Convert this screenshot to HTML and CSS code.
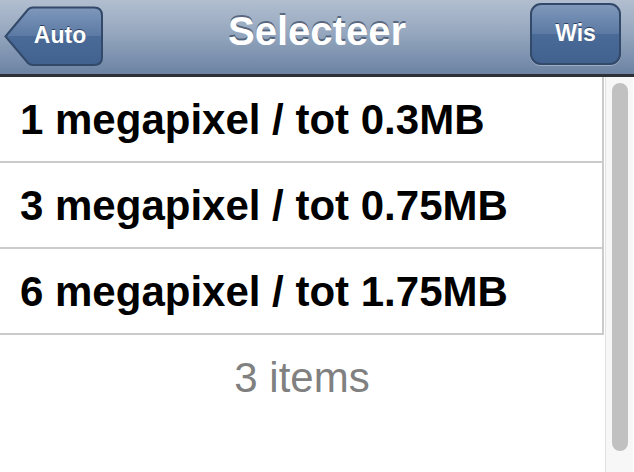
FILE: index.html
```html
<!DOCTYPE html>
<html lang="nl">
<head>
  <meta charset="UTF-8">
  <title>Selecteer</title>
  <link rel="stylesheet" href="styles.css">
</head>
<body>
  <div class="navbar">
    <a class="nav-btn back-btn" href="#">
      <svg class="back-shape" width="100" height="62" viewBox="0 0 100 62">
        <defs>
          <linearGradient id="btn-grad" x1="0" y1="0" x2="0" y2="1">
            <stop offset="0" stop-color="#7f98bb"/>
            <stop offset="0.5" stop-color="#5b79a3"/>
            <stop offset="0.5" stop-color="#4a6a98"/>
            <stop offset="1" stop-color="#41628f"/>
          </linearGradient>
        </defs>
        <path d="M1.5 32.5 L24 5.5 Q26 3.5 29 3.5 L90 3.5 Q98 3.5 98 11.5 L98 53.5 Q98 61 90 61 L29 61 Q26 61 24 59 Z" fill="url(#btn-grad)" stroke="#33496a" stroke-width="2"/>
      </svg>
      <span class="btn-label">Auto</span>
    </a>
    <h1 class="title">Selecteer</h1>
    <a class="nav-btn wis-btn" href="#"><span class="btn-label">Wis</span></a>
  </div>

  <div class="content">
    <div class="list-col">
      <ul class="list">
        <li class="row">1 megapixel / tot 0.3MB</li>
        <li class="row">3 megapixel / tot 0.75MB</li>
        <li class="row">6 megapixel / tot 1.75MB</li>
      </ul>
      <div class="count">3 items</div>
    </div>
    <div class="scroll-track">
      <div class="scroll-thumb"></div>
    </div>
  </div>
</body>
</html>
```

FILE: styles.css
```css
body {
  margin: 0;
  width: 634px;
  height: 472px;
  overflow: hidden;
  font-family: "Liberation Sans", Arial, sans-serif;
  background: #fff;
}
.navbar {
  position: relative;
  height: 74px;
  border-bottom: 3px solid #2d3036;
  background: linear-gradient(to bottom, #b2bed0 0%, #95a7be 45%, #7e93b0 75%, #6c83a2 100%);
  display: flex;
  align-items: center;
  justify-content: space-between;
  padding: 0 13px 0 4px;
}
.title {
  position: absolute;
  left: 0;
  right: 0;
  top: 0;
  margin: 0;
  line-height: 63px;
  text-align: center;
  font-size: 40px;
  font-weight: bold;
  color: #fff;
  text-shadow: 0 -2px 0 rgba(40, 55, 80, 0.6);
  pointer-events: none;
}
.nav-btn {
  position: relative;
  z-index: 1;
  display: flex;
  align-items: center;
  justify-content: center;
  height: 58px;
  text-decoration: none;
}
.btn-label {
  position: relative;
  font-size: 23px;
  font-weight: bold;
  color: #fff;
  text-shadow: 0 -1px 0 rgba(20, 35, 60, 0.7);
}
.back-btn {
  width: 100px;
  height: 62px;
  margin-top: -4px;
  padding-left: 12px;
  box-sizing: border-box;
}
.back-shape {
  position: absolute;
  left: 0;
  top: 0;
}
.wis-btn {
  width: 87px;
  border: 2px solid #33496a;
  border-radius: 11px;
  margin-top: -7px;
  background: linear-gradient(to bottom, #7f98bb 0%, #5b79a3 50%, #4a6a98 50%, #41628f 100%);
  box-shadow: 0 1px 0 rgba(255, 255, 255, 0.3);
}
.content {
  display: flex;
  height: 395px;
}
.list-col {
  width: 604px;
}
.list {
  list-style: none;
  margin: 0;
  padding: 0;
  border-right: 2px solid #cbcbcb;
}
.row {
  height: 84px;
  line-height: 86px;
  border-bottom: 2px solid #cbcbcb;
  padding-left: 20px;
  font-size: 42px;
  font-weight: bold;
  color: #000;
}
.count {
  height: 86px;
  line-height: 86px;
  text-align: center;
  font-size: 42px;
  color: #808080;
}
.scroll-track {
  width: 27px;
  margin-left: 1px;
  border-left: 1px solid #e2e2e2;
  background: #f7f7f7;
  padding-top: 6px;
}
.scroll-thumb {
  width: 16px;
  height: 368px;
  margin-left: 6px;
  border-radius: 8px;
  background: #c1c1c1;
}
```
